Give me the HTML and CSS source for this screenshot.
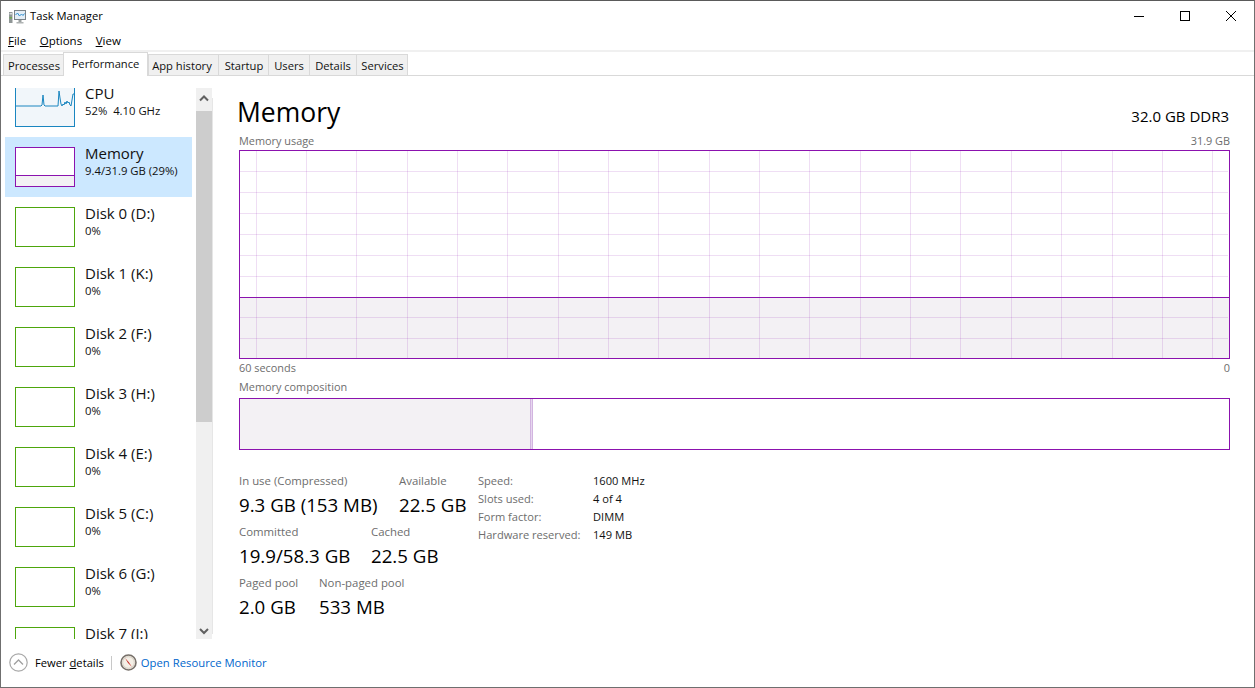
FILE: index.html
```html
<!DOCTYPE html>
<html lang="en">
<head>
<meta charset="utf-8">
<title>Task Manager</title>
<link rel="stylesheet" href="styles.css">
</head>
<body>
<div class="window">
  <header class="titlebar">
    <svg class="app-icon" width="17" height="14" viewBox="0 0 17 14"><rect x="0" y="2" width="3.5" height="11" fill="#8f9696"/><rect x=".5" y="3" width="2.5" height="1.5" fill="#d8dcdc"/><rect x=".5" y="7" width="2.5" height="1.5" fill="#6fa84f"/><rect x="5.5" y=".5" width="11" height="9" fill="#e3edf5" stroke="#7a8288"/><path d="M6.5 5 L8.5 3 L10.5 6 L12.5 4 L14 5.5 L15.5 3.5" fill="none" stroke="#2f8fd0" stroke-width="1"/><rect x="9.5" y="10" width="3" height="2" fill="#9aa0a0"/><rect x="7.5" y="12" width="7" height="1.5" fill="#b0b4b4"/></svg>
    <span class="title">Task Manager</span>
    <div class="controls">
      <svg class="ctl" width="46" height="30" viewBox="0 0 46 30"><path d="M18 15.5 H28" stroke="#000"/></svg>
      <svg class="ctl" width="46" height="30" viewBox="0 0 46 30"><rect x="18.5" y="10.5" width="9" height="9" fill="none" stroke="#000"/></svg>
      <svg class="ctl" width="46" height="30" viewBox="0 0 46 30"><path d="M18 10 L28 20 M28 10 L18 20" stroke="#000"/></svg>
    </div>
  </header>
  <nav class="menubar">
    <span class="menu"><u>F</u>ile</span>
    <span class="menu"><u>O</u>ptions</span>
    <span class="menu"><u>V</u>iew</span>
  </nav>
  <div class="tabs">
    <span class="tab t-proc">Processes</span>
    <span class="tab active t-perf">Performance</span>
    <span class="tab t-app">App history</span>
    <span class="tab t-start">Startup</span>
    <span class="tab t-users">Users</span>
    <span class="tab t-det">Details</span>
    <span class="tab t-serv">Services</span>
  </div>
  <div class="content">
    <aside class="sidebar">
      <div class="list">
        <div class="items">
          <div class="item">
            <div class="thumb cpu">
              <svg width="58" height="38" viewBox="0 0 58 38" class="cpu-svg"><path d="M0 18 H25 L26 17 L27 7 L28 17 L29 18 H42 L43 3 L44 10 L45 16 L46 18 L47 16 L48 17 L49 14 L50 16 L51 13 L52 15 L53 14 L54 17 L55 18 L56 12 L57 6 L58 6 V38 H0 Z" fill="#f1f6fa"/><path d="M0 18 H25 L26 17 L27 7 L28 17 L29 18 H42 L43 3 L44 10 L45 16 L46 18 L47 16 L48 17 L49 14 L50 16 L51 13 L52 15 L53 14 L54 17 L55 18 L56 12 L57 6 L58 6" fill="none" stroke="#1a86c0" stroke-width="1"/></svg>
            </div>
            <div class="info"><div class="name">CPU</div><div class="sub">52%&nbsp; 4.10 GHz</div></div>
          </div>
          <div class="item selected">
            <div class="thumb mem"><div class="mem-fill"></div></div>
            <div class="info"><div class="name">Memory</div><div class="sub">9.4/31.9 GB (29%)</div></div>
          </div>
          <div class="item"><div class="thumb disk"></div><div class="info"><div class="name">Disk 0 (D:)</div><div class="sub">0%</div></div></div>
          <div class="item"><div class="thumb disk"></div><div class="info"><div class="name">Disk 1 (K:)</div><div class="sub">0%</div></div></div>
          <div class="item"><div class="thumb disk"></div><div class="info"><div class="name">Disk 2 (F:)</div><div class="sub">0%</div></div></div>
          <div class="item"><div class="thumb disk"></div><div class="info"><div class="name">Disk 3 (H:)</div><div class="sub">0%</div></div></div>
          <div class="item"><div class="thumb disk"></div><div class="info"><div class="name">Disk 4 (E:)</div><div class="sub">0%</div></div></div>
          <div class="item"><div class="thumb disk"></div><div class="info"><div class="name">Disk 5 (C:)</div><div class="sub">0%</div></div></div>
          <div class="item"><div class="thumb disk"></div><div class="info"><div class="name">Disk 6 (G:)</div><div class="sub">0%</div></div></div>
          <div class="item"><div class="thumb disk"></div><div class="info"><div class="name">Disk 7 (J:)</div><div class="sub">0%</div></div></div>
        </div>
      </div>
      <div class="scrollbar">
        <div class="sb-btn"><svg width="16" height="22" viewBox="0 0 16 22"><path d="M4 12.5 L8 8.5 L12 12.5" fill="none" stroke="#606060" stroke-width="2"/></svg></div>
        <div class="sb-thumb"></div>
        <div class="sb-track"></div>
        <div class="sb-btn down"><svg width="16" height="17" viewBox="0 0 16 17"><path d="M4 7 L8 11 L12 7" fill="none" stroke="#606060" stroke-width="2"/></svg></div>
      </div>
      <div class="pane-line"></div>
    </aside>
    <main class="panel">
      <div class="head"><h1>Memory</h1><span class="spec">32.0 GB DDR3</span></div>
      <div class="caption c-top"><span>Memory usage</span><span>31.9 GB</span></div>
      <div class="chart">
        <div class="chart-fill"></div>
        <svg class="grid" width="989" height="207" viewBox="0 0 989 207" shape-rendering="crispEdges">
          <g stroke="#8b12ae" stroke-opacity=".14">
            <path d="M0 20.5H988M0 41.5H988M0 62.5H988M0 83.5H988M0 104.5H988M0 125.5H988M0 166.5H988M0 187.5H988"/>
            <path d="M16.5 0V207M66.5 0V207M116.5 0V207M167.5 0V207M217.5 0V207M267.5 0V207M318.5 0V207M368.5 0V207M418.5 0V207M469.5 0V207M519.5 0V207M569.5 0V207M620.5 0V207M670.5 0V207M720.5 0V207M771.5 0V207M821.5 0V207M872.5 0V207M922.5 0V207M972.5 0V207"/>
          </g>
          <path d="M0 146.5H989" stroke="#8b12ae"/>
        </svg>
      </div>
      <div class="caption c-time"><span>60 seconds</span><span>0</span></div>
      <div class="caption c-comp"><span>Memory composition</span></div>
      <div class="composition"><div class="comp-used"></div><div class="comp-mod"></div></div>
      <div class="stats">
        <div class="stat-col">
          <div class="stat-row">
            <div class="stat s-inuse"><div class="label">In use (Compressed)</div><div class="value">9.3 GB (153 MB)</div></div>
            <div class="stat"><div class="label">Available</div><div class="value">22.5 GB</div></div>
          </div>
          <div class="stat-row">
            <div class="stat s-comm"><div class="label">Committed</div><div class="value">19.9/58.3 GB</div></div>
            <div class="stat"><div class="label">Cached</div><div class="value">22.5 GB</div></div>
          </div>
          <div class="stat-row">
            <div class="stat s-paged"><div class="label">Paged pool</div><div class="value">2.0 GB</div></div>
            <div class="stat"><div class="label">Non-paged pool</div><div class="value">533 MB</div></div>
          </div>
        </div>
        <dl class="props">
          <dt>Speed:</dt><dd>1600 MHz</dd>
          <dt>Slots used:</dt><dd>4 of 4</dd>
          <dt>Form factor:</dt><dd>DIMM</dd>
          <dt>Hardware reserved:</dt><dd>149 MB</dd>
        </dl>
      </div>
    </main>
  </div>
  <footer class="footer">
    <svg class="fewer-icon" width="19" height="19" viewBox="0 0 19 19"><circle cx="9.5" cy="9.5" r="8.7" fill="#fff" stroke="#a8a8a8" stroke-width="1.2"/><path d="M5 11.5 L9.5 7 L14 11.5" fill="none" stroke="#a0a0a0" stroke-width="1.3"/></svg>
    <span class="fewer">Fewer <u>d</u>etails</span>
    <span class="sep"></span>
    <svg class="rm-icon" width="17" height="17" viewBox="0 0 17 17"><circle cx="8.5" cy="8.5" r="7.5" fill="#f4efe6" stroke="#77706a" stroke-width="1.6"/><path d="M5 4 L8.7 8 L12 13 L8 9 Z" fill="#c8302a"/><circle cx="8.5" cy="8.5" r="5.8" fill="none" stroke="#c9c2b6" stroke-width=".7"/></svg>
    <span class="link">Open Resource Monitor</span>
  </footer>
</div>
</body>
</html>
```

FILE: styles.css
```css
* { box-sizing: border-box; }
html, body { margin: 0; padding: 0; height: 100%; background: #fff; }
body { font-family: "Open Sans", "Noto Sans", sans-serif; font-size: 12px; color: #000; overflow: hidden; }
.window { width: 1255px; height: 688px; border: 1px solid #6f6f6f; border-top-color: #5a5a5a; display: flex; flex-direction: column; background: #fff; }

.titlebar { height: 29px; display: flex; align-items: center; padding-left: 8px; flex: none; }
.app-icon { flex: none; margin-top: 3px; }
.title { font-size: 11.2px; margin-left: 4px; }
.controls { margin-left: auto; display: flex; }
.ctl { display: block; }

.menubar { height: 20px; display: flex; flex: none; padding-left: 7px; gap: 13.5px; align-items: center; }
.menu { font-size: 11.5px; }

.tabs { height: 26px; flex: none; display: flex; align-items: flex-end; padding-left: 2px; background: linear-gradient(#f0f0f0 0 2px, #fff 2px); border-bottom: 1px solid #d9d9d9; }
.tab { height: 21px; background: #f0f0f0; border: 1px solid #d9d9d9; border-bottom: 0; margin-left: -1px; font-size: 11.2px; display: flex; align-items: center; justify-content: center; color: #111; }
.tab.active { height: 24px; background: #fff; margin-bottom: -1px; position: relative; padding-bottom: 3px; }
.t-proc { width: 61px; margin-left: 0; padding-left: 1px; }
.t-perf { width: 85px; }
.t-app { width: 71px; margin-left: 0; padding-right: 3px; }
.t-start { width: 51px; padding-left: 1px; }
.t-users { width: 42px; }
.t-det { width: 48px; }
.t-serv { width: 52px; padding-left: 1px; }

.content { flex: none; height: 564px; display: flex; }
.sidebar { width: 212px; flex: none; display: flex; padding-top: 12px; padding-left: 4px; height: 564px; }
.list { width: 187px; height: 551px; overflow: hidden; margin-right: 4px; flex: none; }
.items { margin-top: -11px; }
.item { height: 60px; display: flex; padding: 10px 0 0 10px; }
.item.selected { background: #cce8ff; }
.thumb { width: 60px; height: 40px; border: 1px solid #4da60c; background: #fff; flex: none; }
.thumb.cpu { border-color: #1a86c0; background: #f1f6fa; }
.cpu-svg { display: block; }
.thumb.mem { border-color: #8b12ae; display: flex; flex-direction: column; justify-content: flex-end; }
.mem-fill { height: 11px; background: #f3f1f4; border-top: 1px solid #8b12ae; }
.info { margin-left: 10px; }
.name { font-size: 15px; line-height: 17px; margin-top: -2px; color: #111; }
.sub { font-size: 11.3px; line-height: 16px; margin-top: 1px; color: #111; }

.scrollbar { width: 16px; height: 551px; background: #f0f0f0; display: flex; flex-direction: column; flex: none; }
.sb-btn { height: 22px; flex: none; }
.sb-btn.down { height: 17px; }
.sb-btn svg { display: block; }
.sb-thumb { height: 311px; background: #cdcdcd; flex: none; margin-top: 1px; }
.sb-track { flex: 1; }
.pane-line { width: 1px; height: 536px; margin-top: 10px; background: #e6e6e6; flex: none; }

.panel { flex: 1; min-width: 0; padding: 18px 0 0 26px; }
.head { display: flex; justify-content: space-between; align-items: flex-end; width: 990px; height: 36px; }
h1 { margin: 0 0 0 -2px; font-size: 26.5px; font-weight: 400; line-height: 36px; }
.spec { font-size: 15px; line-height: 22px; margin-bottom: 3px; }
.caption { width: 991px; display: flex; justify-content: space-between; color: #6d6d6d; font-size: 10.9px; line-height: 14px; }
.c-top { height: 14px; margin-top: 4px; margin-bottom: 2px; }
.chart { width: 991px; height: 209px; border: 1px solid #8b12ae; position: relative; background: #fff; }
.chart-fill { position: absolute; left: 0; right: 0; bottom: 0; height: 60px; background: #f3f1f4; }
.grid { position: absolute; left: 0; top: 0; display: block; }
.c-time { margin-top: 2px; height: 14px; }
.c-comp { margin-top: 5px; height: 14px; margin-bottom: 4px; }
.composition { width: 991px; height: 52px; border: 1px solid #8b12ae; display: flex; }
.comp-used { width: 290px; background: #f3f1f4; }
.comp-mod { width: 3px; border-left: 1px solid #d2b4e0; border-right: 1px solid #d2b4e0; background: #e6d6ee; }

.stats { display: flex; margin-top: 23px; }
.stat-col { width: 239px; flex: none; }
.stat-row { display: flex; height: 51px; }
.stat .label { color: #6d6d6d; font-size: 11.4px; line-height: 16px; }
.stat .value { font-size: 18.7px; line-height: 24px; margin-top: 4px; }
.s-inuse { width: 160px; }
.s-comm { width: 132px; }
.s-paged { width: 80px; }
.props { margin: 0; display: grid; grid-template-columns: 115px auto; grid-auto-rows: 18px; font-size: 11.1px; line-height: 16px; }
.props dt { color: #6d6d6d; }
.props dd { margin: 0; color: #111; }

.footer { flex: 1; min-height: 0; display: flex; align-items: center; padding: 0 0 2px 8px; }
.fewer-icon { flex: none; }
.fewer { margin-left: 7px; font-size: 11.2px; }
.sep { width: 1px; height: 14px; background: #c8c8c8; margin-left: 7px; }
.rm-icon { flex: none; margin-left: 8px; }
.link { margin-left: 4px; color: #0066cc; font-size: 11.3px; }
```
